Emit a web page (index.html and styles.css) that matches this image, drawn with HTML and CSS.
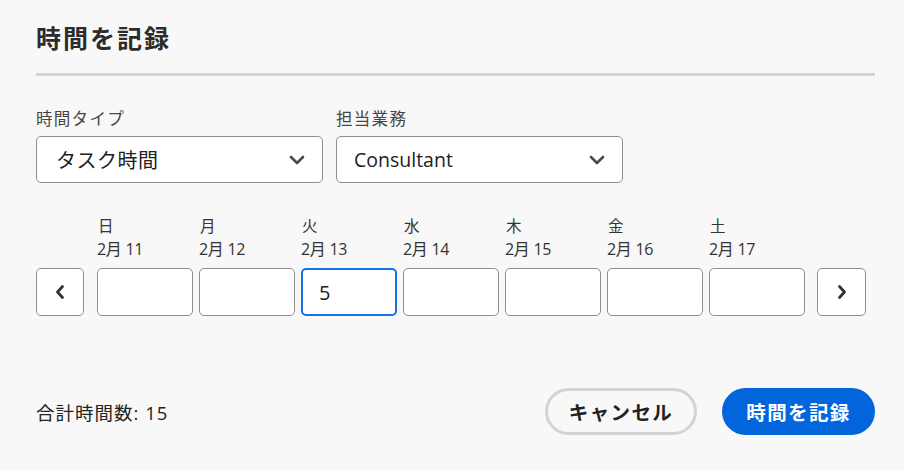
FILE: index.html
```html
<!DOCTYPE html>
<html lang="ja">
<head>
<meta charset="utf-8">
<title>時間を記録</title>
<link rel="stylesheet" href="styles.css">
</head>
<body>
<div class="dialog">
  <h1 class="title">時間を記録</h1>
  <div class="divider"></div>

  <div class="fields">
    <div class="field">
      <div class="label">時間タイプ</div>
      <div class="select">
        <span class="select-text">タスク時間</span>
        <svg class="chev-down" width="16" height="10" viewBox="0 0 16 10"><path d="M2 2 L8 8 L14 2" fill="none" stroke="#4b4b4b" stroke-width="2.6" stroke-linecap="round" stroke-linejoin="round"/></svg>
      </div>
    </div>
    <div class="field">
      <div class="label">担当業務</div>
      <div class="select">
        <span class="select-text latin">Consultant</span>
        <svg class="chev-down" width="16" height="10" viewBox="0 0 16 10"><path d="M2 2 L8 8 L14 2" fill="none" stroke="#4b4b4b" stroke-width="2.6" stroke-linecap="round" stroke-linejoin="round"/></svg>
      </div>
    </div>
  </div>

  <div class="week">
    <button class="nav nav-prev" aria-label="前の週">
      <svg width="12" height="16" viewBox="0 0 12 16"><path d="M8.5 2.5 L3.5 8 L8.5 13.5" fill="none" stroke="#333" stroke-width="2.8" stroke-linecap="round" stroke-linejoin="round"/></svg>
    </button>
    <div class="days">
      <div class="day"><div class="dow">日</div><div class="date">2月 11</div><input class="hours" type="text" value=""></div>
      <div class="day"><div class="dow">月</div><div class="date">2月 12</div><input class="hours" type="text" value=""></div>
      <div class="day"><div class="dow">火</div><div class="date">2月 13</div><input class="hours active" type="text" value="5"></div>
      <div class="day"><div class="dow">水</div><div class="date">2月 14</div><input class="hours" type="text" value=""></div>
      <div class="day"><div class="dow">木</div><div class="date">2月 15</div><input class="hours" type="text" value=""></div>
      <div class="day"><div class="dow">金</div><div class="date">2月 16</div><input class="hours" type="text" value=""></div>
      <div class="day"><div class="dow">土</div><div class="date">2月 17</div><input class="hours" type="text" value=""></div>
    </div>
    <button class="nav nav-next" aria-label="次の週">
      <svg width="12" height="16" viewBox="0 0 12 16"><path d="M3.5 2.5 L8.5 8 L3.5 13.5" fill="none" stroke="#333" stroke-width="2.8" stroke-linecap="round" stroke-linejoin="round"/></svg>
    </button>
  </div>

  <div class="footer">
    <div class="total">合計時間数: 15</div>
    <div class="actions">
      <button class="btn btn-secondary">キャンセル</button>
      <button class="btn btn-primary">時間を記録</button>
    </div>
  </div>
</div>
</body>
</html>
```
FILE: styles.css
```css
html, body {
  margin: 0;
  padding: 0;
  background: #f8f8f8;
}
body {
  font-family: "Open Sans", "Noto Sans CJK JP", sans-serif;
  color: #2c2c2c;
  width: 904px;
  height: 470px;
  overflow: hidden;
}
.dialog {
  padding: 20px 29px 0 36px;
}
.title {
  margin: 0;
  font-family: "Noto Sans CJK JP", sans-serif;
  font-size: 25px;
  letter-spacing: 2px;
  line-height: 34px;
  font-weight: 700;
  color: #2c2c2c;
}
.divider {
  height: 3px;
  background: #d5d5d5;
  margin-top: 19px;
}
.fields {
  display: flex;
  gap: 13px;
  margin-top: 31px;
}
.field {
  width: 287px;
}
.label {
  font-family: "Noto Sans CJK JP", sans-serif;
  font-size: 16.5px;
  letter-spacing: 1.3px;
  line-height: 22px;
  color: #464646;
  margin-bottom: 7px;
}
.select {
  box-sizing: border-box;
  height: 47px;
  border: 1px solid #8e8e8e;
  border-radius: 5px;
  background: #fff;
  display: flex;
  align-items: center;
  justify-content: space-between;
  padding: 0 17px 0 19px;
}
.select-text {
  font-family: "Noto Sans CJK JP", sans-serif;
  font-size: 20px;
  letter-spacing: 0.5px;
  color: #222;
}
.select-text.latin {
  font-family: "Open Sans", sans-serif;
  letter-spacing: 0;
  font-size: 19.5px;
  margin-left: -2px;
}
.chev-down {
  display: block;
}
.week {
  display: flex;
  align-items: flex-end;
  margin-top: 30px;
}
.nav {
  box-sizing: border-box;
  width: 48px;
  height: 48px;
  border: 1px solid #8e8e8e;
  border-radius: 5px;
  background: #fff;
  padding: 0;
  display: flex;
  align-items: center;
  justify-content: center;
}
.nav-prev { margin-right: 13px; }
.nav-next { margin-left: 12px; width: 49px; }
.days {
  display: flex;
  gap: 6px;
}
.day {
  width: 96px;
  display: flex;
  flex-direction: column;
}
.dow {
  font-family: "Noto Sans CJK JP", sans-serif;
  font-size: 15.5px;
  line-height: 24px;
  color: #333;
  padding-left: 1px;
}
.date {
  font-size: 16px;
  line-height: 24px;
  color: #333;
  margin-bottom: 7px;
  letter-spacing: -0.3px;
}
.hours {
  box-sizing: border-box;
  width: 96px;
  height: 48px;
  border: 1px solid #8e8e8e;
  border-radius: 5px;
  background: #fff;
  font-family: "Open Sans", sans-serif;
  font-size: 20px;
  color: #222;
  padding: 0 0 0 17px;
  margin: 0;
  outline: none;
}
.hours.active {
  border: 2px solid #1473e6;
  padding-left: 16px;
}
.footer {
  display: flex;
  align-items: center;
  justify-content: space-between;
  margin-top: 72px;
}
.total {
  font-size: 18.5px;
  letter-spacing: 1px;
  color: #222;
}
.actions {
  display: flex;
  gap: 25px;
}
.btn {
  box-sizing: border-box;
  height: 47px;
  border-radius: 24px;
  font-family: "Noto Sans CJK JP", sans-serif;
  font-weight: 700;
  font-size: 19.5px;
  letter-spacing: 1.4px;
  padding: 0;
  display: flex;
  align-items: center;
  justify-content: center;
}
.btn-secondary {
  width: 152px;
  background: transparent;
  border: 3px solid #d3d3d3;
  color: #222;
}
.btn-primary {
  width: 153px;
  background: #0265dc;
  border: none;
  color: #fff;
}
```
